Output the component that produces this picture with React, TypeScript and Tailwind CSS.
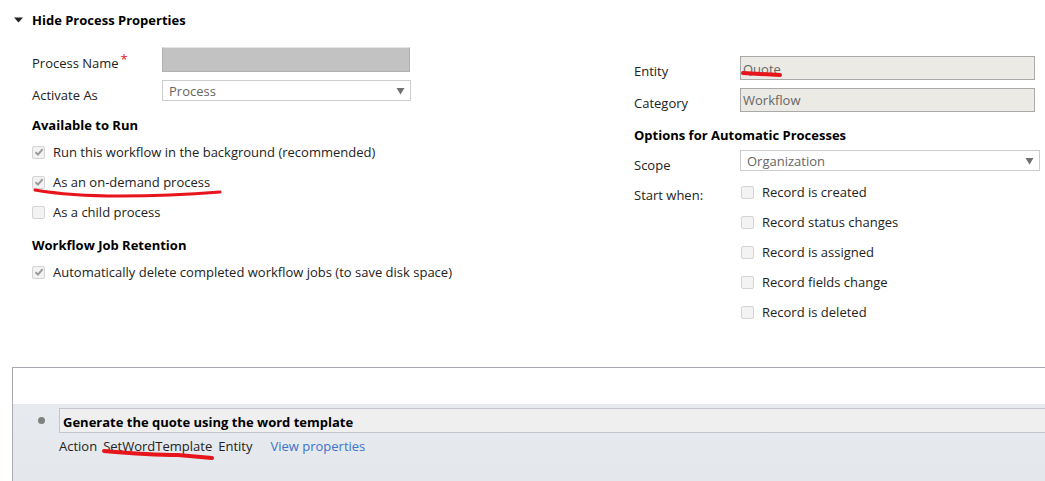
import React from "react";

type CheckProps = {
  checked?: boolean;
  label: string;
};

function Check({ checked, label }: CheckProps) {
  return (
    <div className="flex h-[30px] items-center">
      <span className="flex h-[13px] w-[13px] items-center justify-center rounded-[2px] border border-[#d4d4d4] bg-[#f3f3f3]">
        {checked && (
          <svg width="10" height="10" viewBox="0 0 10 10">
            <path d="M1.5 5.2 L4 7.6 L8.6 2.2" fill="none" stroke="#9a9a9a" strokeWidth="2" />
          </svg>
        )}
      </span>
      <span className="ml-[8px] text-[#222]">{label}</span>
    </div>
  );
}

function Arrow() {
  return (
    <svg width="9" height="8" viewBox="0 0 9 8">
      <path d="M0.5 1 L8.5 1 L4.5 7.5 Z" fill="#707070" />
    </svg>
  );
}

export default function App() {
  return (
    <div
      className="relative h-[481px] w-[1045px] overflow-hidden bg-white text-[13px] leading-[20px] text-[#222]"
      style={{ fontFamily: '"Open Sans", "Noto Sans", sans-serif' }}
    >
      <div className="h-[367px]">
        <div className="flex h-[40px] items-center pl-[14px]">
          <svg width="9" height="6" viewBox="0 0 9 6">
            <path d="M0 0.5 L9 0.5 L4.5 5.5 Z" fill="#222" />
          </svg>
          <span className="ml-[9px] font-bold text-black">Hide Process Properties</span>
        </div>

        <div className="flex">
          {/* left column */}
          <div className="w-[634px] shrink-0 pl-[32px] pt-[7px]">
            <div className="flex h-[25px] items-start">
              <div className="mt-[6px] w-[130px]">
                Process Name<span className="relative top-[-4px] ml-[2px] text-[#e81123]">*</span>
              </div>
              <div className="h-[25px] w-[248px] border border-[#b0b0b0] border-t-[#e4e4e4] bg-[#c2c2c2]" />
            </div>
            <div className="mt-[8px] flex h-[21px] items-start">
              <div className="mt-[5px] w-[130px]">Activate As</div>
              <div className="flex h-[21px] w-[249px] items-center justify-between border border-[#cccccc] pl-[6px] pr-[5px] text-[#666]">
                <span>Process</span>
                <Arrow />
              </div>
            </div>
            <div className="mt-[14px] font-bold text-black">Available to Run</div>
            <div className="mt-[2px]">
              <Check checked label="Run this workflow in the background (recommended)" />
              <Check checked label="As an on-demand process" />
              <Check label="As a child process" />
            </div>
            <div className="mt-[8px] font-bold text-black">Workflow Job Retention</div>
            <div className="mt-[2px]">
              <Check checked label="Automatically delete completed workflow jobs (to save disk space)" />
            </div>
          </div>

          {/* right column */}
          <div className="flex-1 pt-[16px]">
            <div className="flex h-[24px] items-start">
              <div className="mt-[5px] w-[106px]">Entity</div>
              <div className="flex h-[24px] w-[295px] items-center border border-[#a9a9a9] bg-[#ebeae4] pl-[2px] pt-[1px] text-[#666]">
                Quote
              </div>
            </div>
            <div className="mt-[8px] flex h-[24px] items-start">
              <div className="mt-[5px] w-[106px]">Category</div>
              <div className="flex h-[24px] w-[295px] items-center border border-[#a9a9a9] bg-[#ebeae4] pl-[2px] text-[#666]">
                Workflow
              </div>
            </div>
            <div className="mt-[13px] font-bold text-black">Options for Automatic Processes</div>
            <div className="mt-[5px] flex h-[21px] items-start">
              <div className="mt-[5px] w-[106px]">Scope</div>
              <div className="flex h-[21px] w-[300px] items-center justify-between border border-[#cccccc] pl-[6px] pr-[5px] text-[#666]">
                <span>Organization</span>
                <Arrow />
              </div>
            </div>
            <div className="mt-[6px] flex items-start">
              <div className="mt-[8px] w-[107px]">Start when:</div>
              <div>
                <Check label="Record is created" />
                <Check label="Record status changes" />
                <Check label="Record is assigned" />
                <Check label="Record fields change" />
                <Check label="Record is deleted" />
              </div>
            </div>
          </div>
        </div>
      </div>

      {/* step area */}
      <div className="ml-[12px] h-[114px] border-l border-t border-[#a9a9b1]">
        <div className="h-[36px] bg-white" />
        <div className="h-[78px] bg-gradient-to-b from-[#e7eaee] to-[#e4e7ec] pt-[4px]">
          <div className="flex items-center">
            <span className="ml-[25px] h-[7px] w-[7px] rounded-full bg-[#808080]" />
            <div className="ml-[14px] flex h-[25px] flex-1 items-center border-y border-l border-[#c4c4cf] bg-[#efefef] pl-[3px] pt-[2px] font-bold text-black">
              Generate the quote using the word template
            </div>
          </div>
          <div className="ml-[46px] mt-[3px] flex items-center gap-[6px]">
            <span>Action</span>
            <span>SetWordTemplate</span>
            <span>Entity</span>
            <span className="ml-[12px] text-[#3d72c9]">View properties</span>
          </div>
        </div>
      </div>

      {/* red annotation marks */}
      <svg className="pointer-events-none absolute left-0 top-0" width="1045" height="481">
        <path d="M35 190 Q 70 196 120 196 T 220 192" fill="none" stroke="#e8141c" strokeWidth="3" strokeLinecap="round" />
        <path d="M743 73 L 780 75" fill="none" stroke="#e8141c" strokeWidth="4" strokeLinecap="round" />
        <path d="M104 451 Q 150 455 178 455 L 212 458" fill="none" stroke="#e8141c" strokeWidth="4" strokeLinecap="round" />
      </svg>
    </div>
  );
}
